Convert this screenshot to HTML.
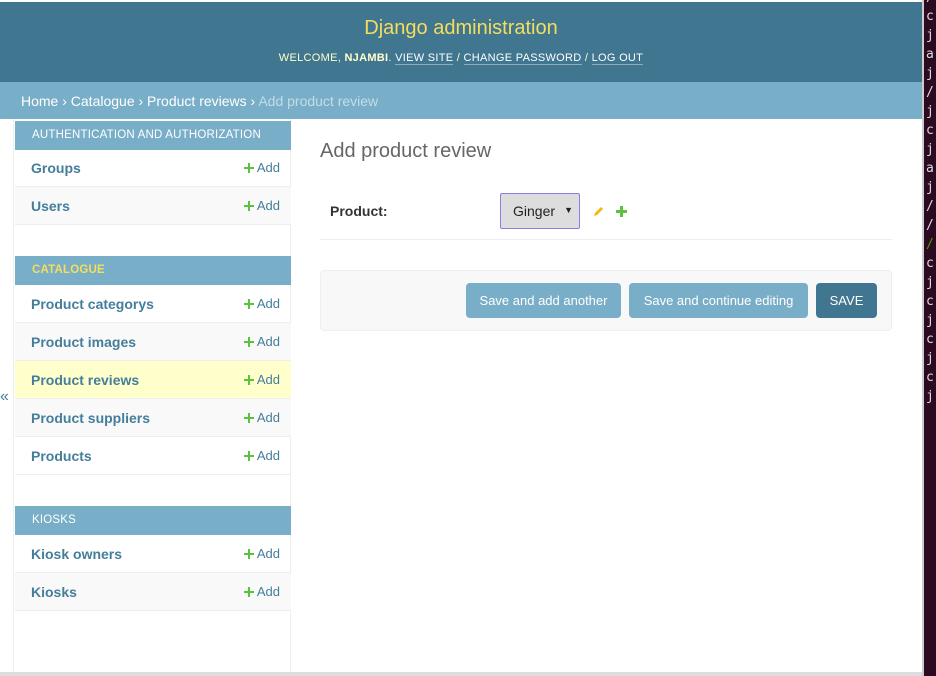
<!DOCTYPE html>
<html><head><style>
*{box-sizing:border-box;margin:0;padding:0}
body{width:936px;height:676px;overflow:hidden;background:#fff;font-family:"Liberation Sans",sans-serif;position:relative}
#term{position:absolute;left:922px;top:0;width:14px;height:676px;background:#2c0a22;border-left:2px solid #ccc;color:#ddd;font-family:"DejaVu Sans Mono",monospace;font-size:13px;line-height:19px;padding-left:2px;overflow:hidden}
#term div{margin-top:-12px}
#page{position:absolute;left:0;top:0;width:922px;height:676px;background:#fff}
#hdr{position:absolute;left:0;top:2px;width:922px;height:80px;background:#417690;text-align:center}
#hdr h1{font-size:20px;color:#f5dd5d;margin-top:15px;font-weight:normal}
#hdr .u{font-size:11px;color:#ffc;letter-spacing:.3px;margin-top:12px}
#hdr .u a{color:#fff;border-bottom:1px solid rgba(255,255,255,.4);text-decoration:none}
#bc{position:absolute;left:0;top:82px;width:922px;height:37px;background:#79aec8;color:#fff;font-size:14px;padding:11px 21px}
#bc span{color:#c4dce8}
#side{position:absolute;left:13px;top:119px;width:278px;height:554px;border-left:1px solid #eee;border-right:1px solid #eee}
.cap{position:absolute;left:1px;width:276px;height:29px;background:#79aec8;color:#fff;font-size:11.5px;letter-spacing:.2px;padding:8px 17px;white-space:nowrap}
.row{position:absolute;left:1px;width:276px;height:38px;border-bottom:1px solid #eee;font-size:14px;padding:11px 16px;color:#447e9b}
.row .a{position:absolute;right:11px;top:11px;font-size:13px}
.row .a svg{margin-right:3px;vertical-align:-1px}
.alt{background:#f9f9f9}
#main h1{position:absolute;left:320px;top:140px;font-size:20px;color:#666;font-weight:normal}
.btn{position:absolute;top:283px;height:35px;background:#79aec8;color:#fff;font-size:13px;border-radius:4px;text-align:center;line-height:35px}
</style></head><body>
<div id="page">
<div id="hdr"><h1>Django administration</h1>
<div class="u">WELCOME, <b>NJAMBI</b>. <a>VIEW SITE</a> / <a>CHANGE PASSWORD</a> / <a>LOG OUT</a></div></div>
<div id="bc">Home › Catalogue › Product reviews › <span>Add product review</span></div>
<div style="position:absolute;left:0;top:388px;color:#447e9b;font-size:16px">«</div>
<div id="side">
<div class="cap" style="top:2px">AUTHENTICATION AND AUTHORIZATION</div>
<div class="row" style="top:30px"><b>Groups</b><span class="a"><svg width="10" height="10"><path d="M4 0h2v4h4v2H6v4H4V6H0V4h4z" fill="#5cc23a"/></svg>Add</span></div>
<div class="row alt" style="top:68px"><b>Users</b><span class="a"><svg width="10" height="10"><path d="M4 0h2v4h4v2H6v4H4V6H0V4h4z" fill="#5cc23a"/></svg>Add</span></div>
<div class="cap" style="top:137px;color:#f5dd5d;font-weight:bold">CATALOGUE</div>
<div class="row" style="top:166px"><b>Product categorys</b><span class="a"><svg width="10" height="10"><path d="M4 0h2v4h4v2H6v4H4V6H0V4h4z" fill="#5cc23a"/></svg>Add</span></div>
<div class="row alt" style="top:204px"><b>Product images</b><span class="a"><svg width="10" height="10"><path d="M4 0h2v4h4v2H6v4H4V6H0V4h4z" fill="#5cc23a"/></svg>Add</span></div>
<div class="row" style="top:242px;background:#ffc"><b>Product reviews</b><span class="a"><svg width="10" height="10"><path d="M4 0h2v4h4v2H6v4H4V6H0V4h4z" fill="#5cc23a"/></svg>Add</span></div>
<div class="row alt" style="top:280px"><b>Product suppliers</b><span class="a"><svg width="10" height="10"><path d="M4 0h2v4h4v2H6v4H4V6H0V4h4z" fill="#5cc23a"/></svg>Add</span></div>
<div class="row" style="top:318px"><b>Products</b><span class="a"><svg width="10" height="10"><path d="M4 0h2v4h4v2H6v4H4V6H0V4h4z" fill="#5cc23a"/></svg>Add</span></div>
<div class="cap" style="top:387px">KIOSKS</div>
<div class="row" style="top:416px"><b>Kiosk owners</b><span class="a"><svg width="10" height="10"><path d="M4 0h2v4h4v2H6v4H4V6H0V4h4z" fill="#5cc23a"/></svg>Add</span></div>
<div class="row alt" style="top:454px"><b>Kiosks</b><span class="a"><svg width="10" height="10"><path d="M4 0h2v4h4v2H6v4H4V6H0V4h4z" fill="#5cc23a"/></svg>Add</span></div>
</div>
<div id="main">
<h1>Add product review</h1>
<div style="position:absolute;left:330px;top:203px;font-size:14px;font-weight:bold;color:#333">Product:</div>
<div style="position:absolute;left:500px;top:193px;width:80px;height:36px;background:#ddd;border:1px solid #8a7ee0;border-radius:2px;font-size:14px;padding:9px 12px;color:#222">Ginger<span style="position:absolute;right:6px;top:11px;font-size:9px">▼</span></div>
<svg style="position:absolute;left:592px;top:205px" width="13" height="13" viewBox="0 0 13 13"><path d="M2 11 L3 8 L9 2 L11 4 L5 10 Z" fill="#efb80b"/></svg>
<svg style="position:absolute;left:616px;top:206px" width="11" height="11"><path d="M4 0h3v4h4v3H7v4H4V7H0V4h4z" fill="#5cc23a"/></svg>
<div style="position:absolute;left:320px;top:239px;width:572px;height:1px;background:#eee"></div>
<div style="position:absolute;left:320px;top:270px;width:572px;height:61px;background:#f8f8f8;border:1px solid #eee;border-radius:4px"></div>
<div class="btn" style="left:466px;width:155px">Save and add another</div>
<div class="btn" style="left:629px;width:179px">Save and continue editing</div>
<div class="btn" style="left:816px;width:61px;background:#417690">SAVE</div>
</div>
<div style="position:absolute;left:0;top:672px;width:922px;height:4px;background:#ddd"></div>
</div>
<div id="term"><div>/<br>c<br>j<br>a<br>j<br>/<br>j<br>c<br>j<br>a<br>j<br>/<br>/<br><span style="color:#4e9a06">/</span><br>c<br>j<br>c<br>j<br>c<br>j<br>c<br>j</div></div>
</body></html>
